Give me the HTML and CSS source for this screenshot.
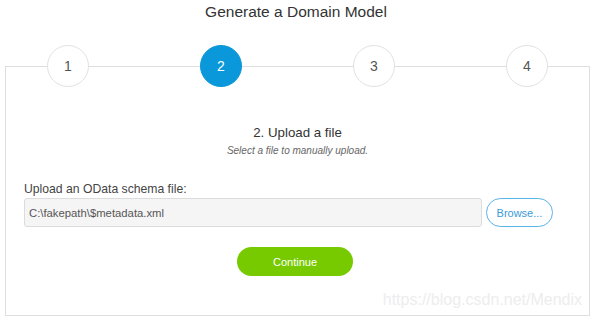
FILE: index.html
```html
<!DOCTYPE html>
<html lang="en">
<head>
  <meta charset="UTF-8">
  <meta name="viewport" content="width=device-width, initial-scale=1.0">
  <title>Generate a Domain Model</title>
  <link rel="stylesheet" href="styles.css">
</head>
<body>
  <h1 class="title">Generate a Domain Model</h1>
  <div class="panel">
    <div class="steps">
      <div class="step">1</div>
      <div class="step active">2</div>
      <div class="step">3</div>
      <div class="step">4</div>
    </div>

    <h2 class="step-title">2. Upload a file</h2>
    <div class="step-subtitle">Select a file to manually upload.</div>

    <div class="upload">
      <label class="label" for="schemaFile">Upload an OData schema file:</label>
      <div class="file-row">
        <input id="schemaFile" class="file-input" type="text" value="C:\fakepath\$metadata.xml" readonly>
        <button class="btn-browse" type="button">Browse...</button>
      </div>
    </div>

    <div class="actions">
      <button class="btn-continue" type="button">Continue</button>
    </div>

    <div class="watermark">https://blog.csdn.net/Mendix</div>
  </div>
</body>
</html>
```

FILE: styles.css
```css
body {
  margin: 0;
  font-family: "Liberation Sans", Arial, sans-serif;
  background: #fff;
  color: #333;
}
.title {
  margin: 0;
  font-size: 15.5px;
  font-weight: normal;
  line-height: 24px;
  text-align: center;
  color: #333;
}
.panel {
  margin: 42px 2px 0 5px;
  border: 1px solid #dedede;
  height: 248px;
}
.steps {
  display: flex;
  justify-content: space-between;
  padding: 0 41px;
  margin-top: -22px;
}
.step {
  box-sizing: border-box;
  width: 42px;
  height: 42px;
  border: 1px solid #e2e2e2;
  border-radius: 50%;
  background: #fff;
  display: flex;
  align-items: center;
  justify-content: center;
  font-size: 14px;
  color: #555;
}
.step.active {
  background: #0a98da;
  border-color: #0a98da;
  color: #fff;
}
.step-title {
  margin: 37px 0 0;
  font-size: 13.3px;
  font-weight: normal;
  line-height: 18px;
  text-align: center;
  color: #333;
}
.step-subtitle {
  margin-top: 2px;
  font-size: 10px;
  font-style: italic;
  line-height: 14px;
  text-align: center;
  color: #666;
}
.upload {
  margin: 23px 36px 0 18px;
}
.label {
  display: block;
  font-size: 12.2px;
  line-height: 16px;
  color: #444;
  margin-bottom: 1px;
}
.file-row {
  display: flex;
  gap: 4px;
  align-items: center;
}
.file-input {
  flex: 1;
  box-sizing: border-box;
  height: 29px;
  margin: 0;
  padding: 0 4px;
  border: 1px solid #dcdcdc;
  border-radius: 3px;
  background: #f5f5f5;
  font-family: "Liberation Sans", Arial, sans-serif;
  font-size: 11.3px;
  color: #555;
  outline: none;
}
.btn-browse {
  box-sizing: border-box;
  width: 67px;
  height: 29px;
  padding: 0;
  border: 1px solid #5ab3e6;
  border-radius: 15px;
  background: #fff;
  font-family: "Liberation Sans", Arial, sans-serif;
  font-size: 11px;
  color: #3a9bd9;
  cursor: pointer;
}
.actions {
  margin-top: 20px;
  display: flex;
  justify-content: center;
  padding-right: 5px;
}
.btn-continue {
  width: 116px;
  height: 29px;
  padding: 0;
  border: none;
  border-radius: 15px;
  background: #77c900;
  font-family: "Liberation Sans", Arial, sans-serif;
  font-size: 11px;
  color: #fff;
  cursor: pointer;
}
.watermark {
  margin-top: 15px;
  padding-right: 7px;
  text-align: right;
  font-size: 16px;
  line-height: 18px;
  color: #ededed;
}
```
